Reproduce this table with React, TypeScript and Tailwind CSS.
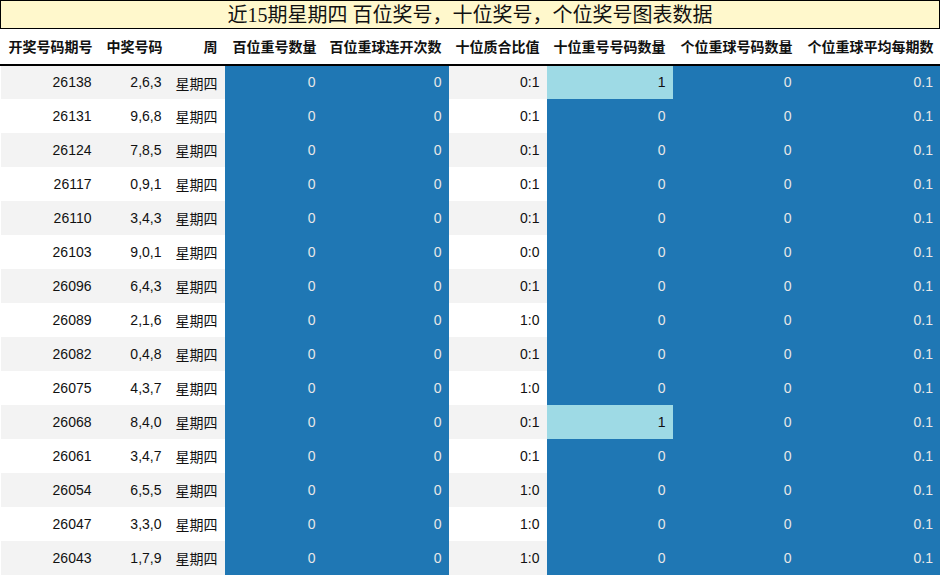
const rows: [string, string, string, number][] = [
  ['26138', '2,6,3', '0:1', 1],
  ['26131', '9,6,8', '0:1', 0],
  ['26124', '7,8,5', '0:1', 0],
  ['26117', '0,9,1', '0:1', 0],
  ['26110', '3,4,3', '0:1', 0],
  ['26103', '9,0,1', '0:0', 0],
  ['26096', '6,4,3', '0:1', 0],
  ['26089', '2,1,6', '1:0', 0],
  ['26082', '0,4,8', '0:1', 0],
  ['26075', '4,3,7', '1:0', 0],
  ['26068', '8,4,0', '0:1', 1],
  ['26061', '3,4,7', '0:1', 0],
  ['26054', '6,5,5', '1:0', 0],
  ['26047', '3,3,0', '1:0', 0],
  ['26043', '1,7,9', '1:0', 0],
];

const headers = [
  ['开奖号码期号', 'w-[99px]'],
  ['中奖号码', 'w-[70px]'],
  ['周', 'w-[55px]'],
  ['百位重号数量', 'w-[99px]'],
  ['百位重球连开次数', 'w-[125px]'],
  ['十位质合比值', 'w-[98px]'],
  ['十位重号号码数量', 'w-[126px]'],
  ['个位重球号码数量', 'w-[127px]'],
  ['个位重球平均每期数', 'w-[141px]'],
];

const blue = 'bg-[#1f77b4] text-[#e8e8e8]';

export default function App() {
  return (
    <div className="w-[940px] h-[576px] overflow-hidden bg-white font-['Liberation_Sans','Noto_Sans_CJK_SC',sans-serif] text-[14px] text-[#111]">
      <div className="h-[29px] border border-black bg-[#fff8cc] flex items-center justify-center font-['Liberation_Serif','Noto_Sans_CJK_SC',serif] text-[20px] leading-none">
        近15期星期四 百位奖号，十位奖号，个位奖号图表数据
      </div>
      <table className="table-fixed border-collapse w-[940px]">
        <thead>
          <tr className="h-[36px] border-b-2 border-black">
            {headers.map(([h, w]) => (
              <th key={h} className={`${w} text-right pr-[7px] font-bold text-[14px] pt-[2px]`}>
                {h}
              </th>
            ))}
          </tr>
        </thead>
        <tbody>
          {rows.map(([id, nums, ratio, ten], i) => (
            <tr key={id} className={`h-[34px] ${i % 2 === 0 ? 'bg-[#f3f3f3]' : 'bg-white'}`}>
              <td className="text-right pr-[8px] border-l border-white">{id}</td>
              <td className="text-right pr-[8px]">{nums}</td>
              <td className="text-right pr-[7px] pt-[3px]">星期四</td>
              <td className={`text-right pr-[8px] ${blue}`}>0</td>
              <td className={`text-right pr-[7px] ${blue}`}>0</td>
              <td className="text-right pr-[7px]">{ratio}</td>
              <td className={`text-right pr-[7px] ${ten ? 'bg-[#9edae5] text-[#111]' : blue}`}>{ten}</td>
              <td className={`text-right pr-[8px] ${blue}`}>0</td>
              <td className={`text-right pr-[7px] border-r border-white ${blue}`}>0.1</td>
            </tr>
          ))}
        </tbody>
      </table>
    </div>
  );
}
